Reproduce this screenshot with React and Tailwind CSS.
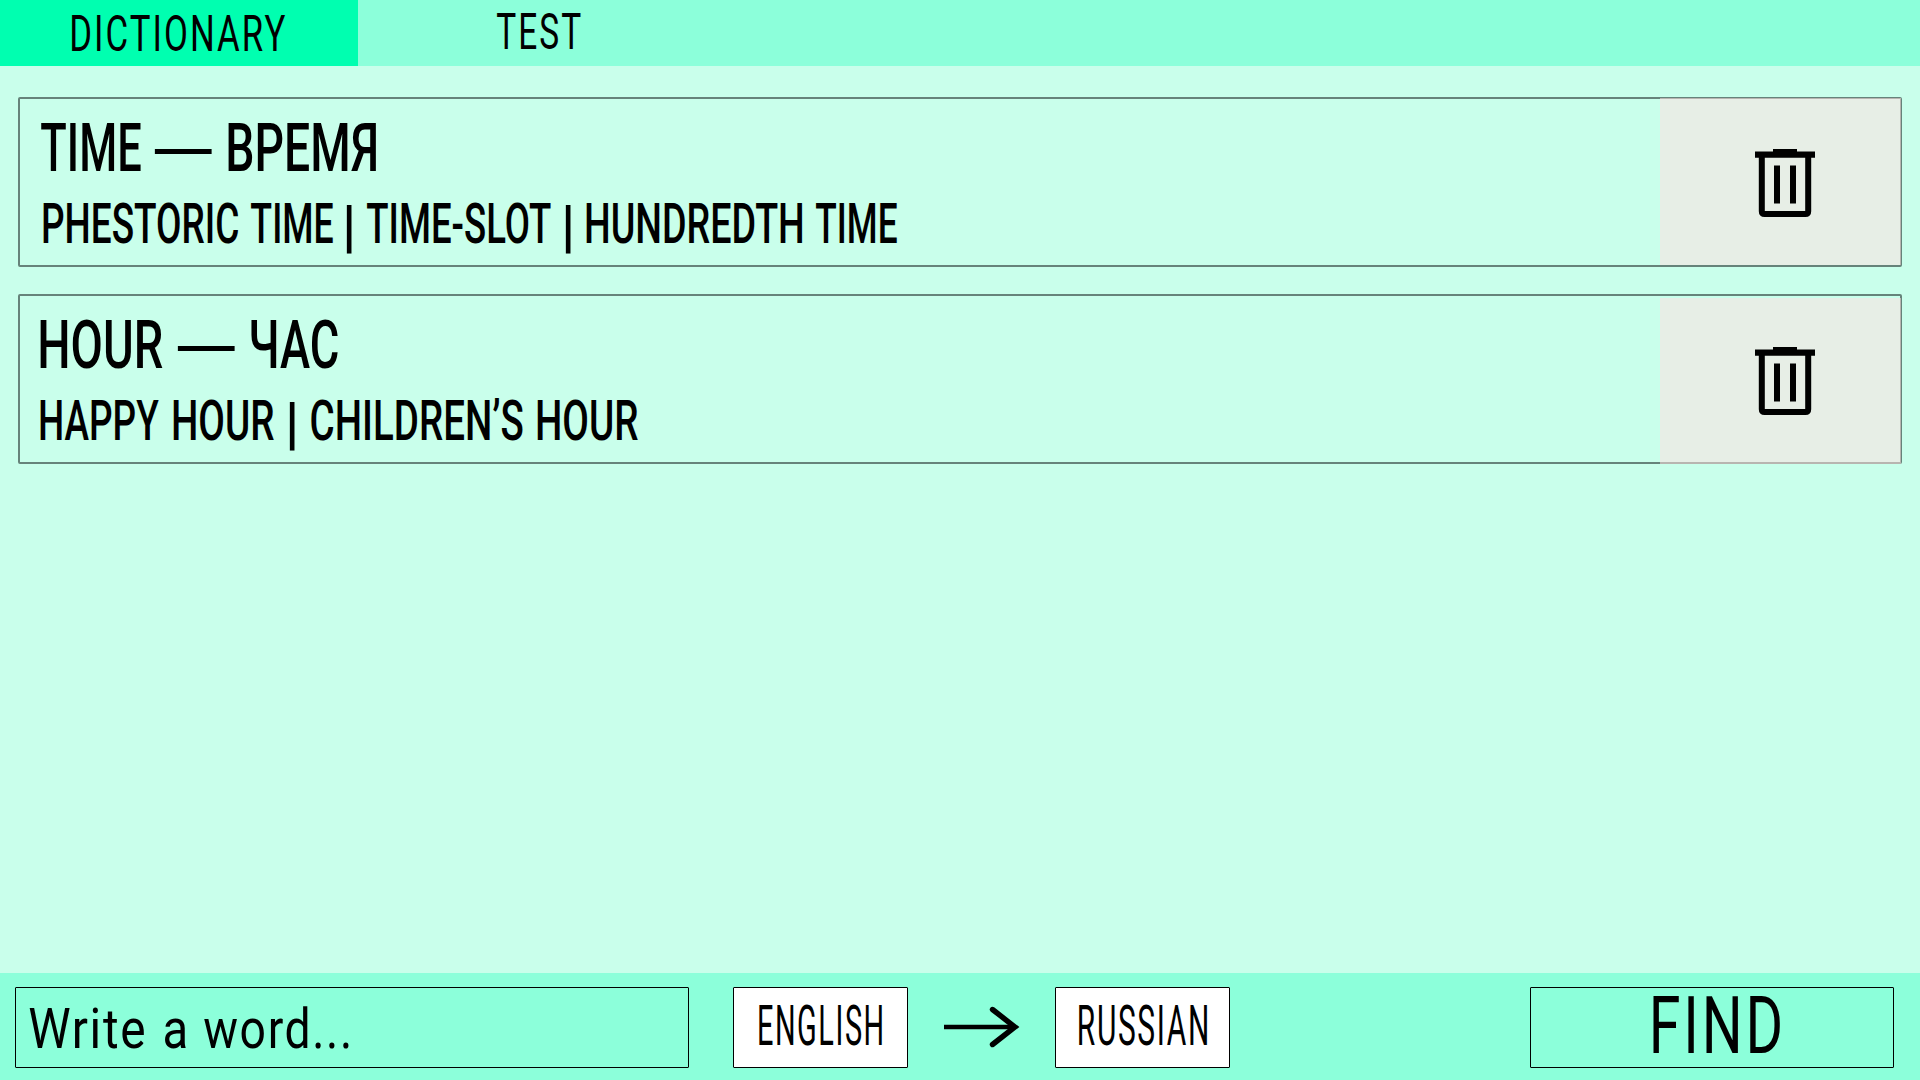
import { Fragment, useLayoutEffect, useRef } from "react";

// One word, condensed or stretched so that its ink fills the width of its box.
function Word({ text, className }) {
  const box = useRef(null);
  const ink = useRef(null);
  useLayoutEffect(() => {
    const fit = () => {
      if (!box.current || !ink.current) return;
      const cs = getComputedStyle(ink.current);
      const ctx = document.createElement("canvas").getContext("2d");
      ctx.font = `${cs.fontWeight} ${cs.fontSize} ${cs.fontFamily}`;
      ctx.letterSpacing = cs.letterSpacing === "normal" ? "0px" : cs.letterSpacing;
      const m = ctx.measureText(text);
      const left = -m.actualBoundingBoxLeft;
      const right = m.actualBoundingBoxRight;
      const k = box.current.clientWidth / (right - left);
      ink.current.style.transform = `translateX(${-left * k}px) scaleX(${k})`;
    };
    fit();
    document.fonts.ready.then(fit);
  }, [text]);
  return (
    <span ref={box} className={`block shrink-0 whitespace-nowrap ${className}`}>
      <span ref={ink} className="inline-block origin-left align-top">{text}</span>
    </span>
  );
}

function Line({ words, className }) {
  return (
    <div className={`flex ${className}`}>
      {words.map(([text, cls], i) => (
        <Fragment key={i}>
          {i > 0 ? " " : null}
          <Word text={text} className={cls} />
        </Fragment>
      ))}
    </div>
  );
}

function TrashIcon() {
  return (
    <svg width="60" height="68" viewBox="0 0 60 68" className="block">
      <path d="M0 2.6H18V0H42V2.6H60V8.8H0Z" fill="#000" />
      <path d="M6.8 6V62.2Q6.8 65 9.6 65H50.4Q53.2 65 53.2 62.2V6" fill="none" stroke="#000" strokeWidth="6" />
      <path d="M22 16.5V54.5M38 16.5V54.5" stroke="#000" strokeWidth="6" />
    </svg>
  );
}

function Arrow() {
  return (
    <svg width="76" height="42" viewBox="0 0 76 42" className="block">
      <path d="M0 21H70" stroke="#000" strokeWidth="4.6" />
      <path d="M48.5 3.5L71 21L48.5 38.5" fill="none" stroke="#000" strokeWidth="5.4" strokeLinecap="round" />
    </svg>
  );
}

const entries = [
  {
    pad: "pl-[21px]",
    pad2: "pl-[2px]",
    cell: "-mr-px h-[167px] -mt-px border-t border-r border-[#b8b5b0]",
    icon: "pt-[50px]",
    title: [
      ["TIME", "w-[100px]"],
      ["—", "w-[58px] ml-[13px] pt-[4px] font-normal"],
      ["ВРЕМЯ", "w-[148px] ml-[16px]"],
    ],
    phrases: [
      ["PHESTORIC", "w-[195px]"],
      ["TIME", "w-[82px] ml-[13px]"],
      ["|", "w-[6px] ml-[13px] h-[39px] pt-[2px] font-semibold text-[57px]"],
      ["TIME-SLOT", "w-[184px] ml-[15px]"],
      ["|", "w-[6px] ml-[14px] h-[39px] pt-[2px] font-semibold text-[57px]"],
      ["HUNDREDTH", "w-[216px] ml-[15px]"],
      ["TIME", "w-[81px] ml-[14px]"],
    ],
  },
  {
    pad: "pl-[20px]",
    pad2: "pl-0",
    cell: "-mr-px h-[166px] mt-[2px] border-b-2 border-r border-[#b8b5b0]",
    icon: "pt-[49px]",
    title: [
      ["HOUR", "w-[123px]"],
      ["—", "w-[58px] ml-[14px] pt-[4px] font-normal"],
      ["ЧАС", "w-[87px] ml-[16px]"],
    ],
    phrases: [
      ["HAPPY", "w-[119px]"],
      ["HOUR", "w-[101px] ml-[14px]"],
      ["|", "w-[6px] ml-[15px] h-[39px] pt-[2px] font-semibold text-[57px]"],
      ["CHILDREN’S", "w-[212px] ml-[16px]"],
      ["HOUR", "w-[101px] ml-[14px]"],
    ],
  },
];

function Entry({ e }) {
  return (
    <article className="flex h-[170px] w-[1884px] rounded-[2px] border-2 border-[#66837a]">
      <div className={`flex-1 pt-[25px] font-medium ${e.pad}`}>
        <Line words={e.title} className="h-[48px] text-[67.5px] leading-[48px]" />
        <Line words={e.phrases} className={`mt-[33px] text-[55px] leading-[39px] ${e.pad2}`} />
      </div>
      <button className={`flex w-[241px] shrink-0 justify-center bg-[#e7eee6] pl-[10px] ${e.cell} ${e.icon}`}>
        <TrashIcon />
      </button>
    </article>
  );
}

export default function App() {
  return (
    <div className="flex h-[1080px] w-[1920px] flex-col overflow-hidden bg-[#c9ffeb] font-['Roboto','Liberation_Sans',sans-serif] text-black">
      <nav className="flex h-[66px] shrink-0 bg-[#8cffda] text-[50.6px] leading-[36px] tracking-[3px]">
        <div className="w-[358px] bg-[#00ffb0] pt-[16px] pl-[72px]">
          <Word text="DICTIONARY" className="w-[213px]" />
        </div>
        <div className="w-[358px] pt-[14px] pl-[139px]">
          <Word text="TEST" className="w-[84px]" />
        </div>
      </nav>
      <main className="flex flex-1 flex-col gap-[27px] pt-[31px] pl-[18px]">
        {entries.map((e, i) => (
          <Entry key={i} e={e} />
        ))}
      </main>
      <footer className="flex h-[107px] shrink-0 bg-[#8cffda] pt-[14px] pl-[15px]">
        <div className="h-[81px] w-[674px] rounded-[1px] border border-black pt-[21px] pl-[13px]">
          <Line
            className="text-[56.3px] leading-[40px] tracking-[2px]"
            words={[
              ["Write", "w-[115px]"],
              ["a", "w-[21px] ml-[21px]"],
              ["word...", "w-[145px] ml-[18px]"],
            ]}
          />
        </div>
        <div className="ml-[44px] h-[81px] w-[175px] rounded-[1px] border border-black bg-white pt-[19px] pl-[25px] text-[55px] leading-[39px] tracking-[3px]">
          <Word text="ENGLISH" className="w-[123px]" />
        </div>
        <div className="ml-[36px] w-[76px] pt-[19px]">
          <Arrow />
        </div>
        <div className="ml-[35px] h-[81px] w-[175px] rounded-[1px] border border-black bg-white pt-[19px] pl-[23px] text-[55px] leading-[39px] tracking-[3px]">
          <Word text="RUSSIAN" className="w-[128px]" />
        </div>
        <div className="ml-[300px] h-[81px] w-[364px] rounded-[1px] border border-black pt-[10px] pl-[122px] text-[80px] leading-[57px] tracking-[4px]">
          <Word text="FIND" className="w-[127px]" />
        </div>
      </footer>
    </div>
  );
}
